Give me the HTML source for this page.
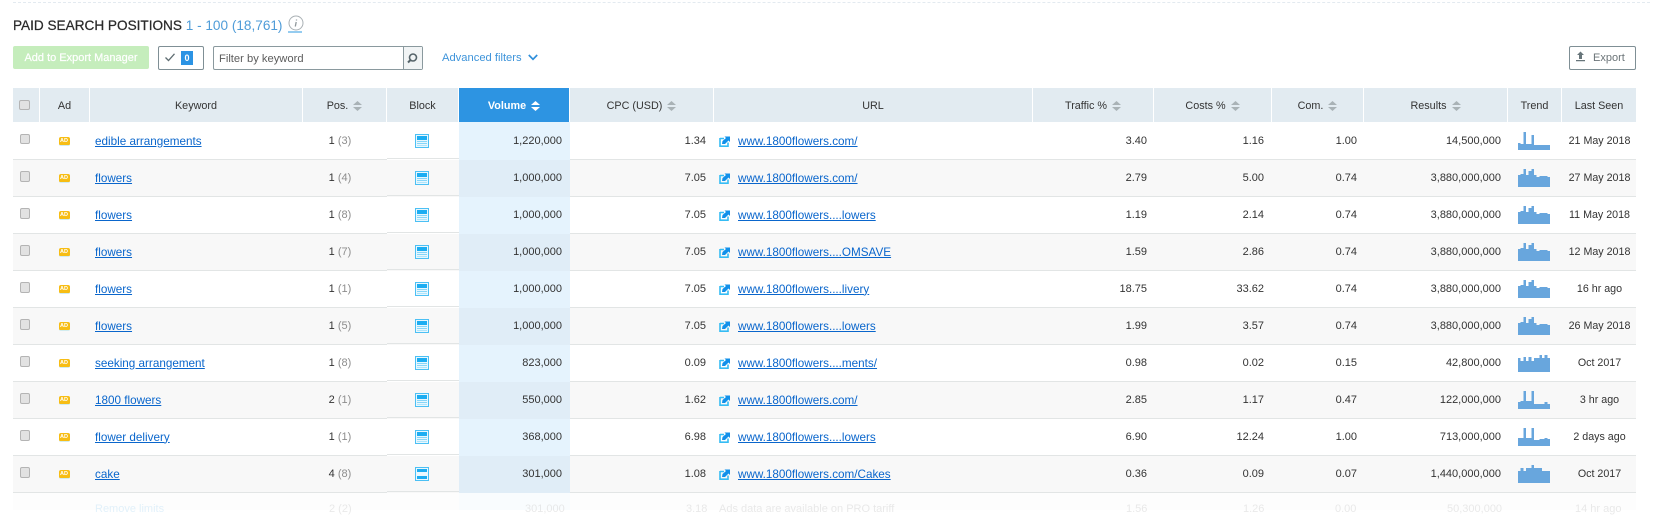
<!DOCTYPE html>
<html><head><meta charset="utf-8"><title>Paid Search Positions</title>
<style>
html,body{margin:0;padding:0;background:#fff}
body{width:1657px;height:510px;overflow:hidden;position:relative;font-family:"Liberation Sans",Arial,sans-serif;font-size:11px;color:#333}
.a{position:absolute;white-space:nowrap}
table{position:absolute;left:13px;top:88px;width:1623px;table-layout:fixed;border-collapse:separate;border-spacing:0}
th{height:34px;padding:1px 0 0;background:#e2ebf1;border-right:1px solid #fff;font-weight:400;color:#333;text-align:center;font-size:10.8px;box-sizing:border-box}
th:last-child{border-right:0}
th.v{background:#2d94e2;color:#fff;font-weight:700;border-right:1px solid #fff}
td{height:37px;padding:1px 0 0;box-sizing:border-box;border-bottom:1px solid #e2e5e5;text-align:right;vertical-align:middle;line-height:13px}
tbody tr:first-child td{height:38px}
tbody tr:nth-child(even) td{background-color:#f8f8f8}
td.c{text-align:center}
td.d{text-align:center;padding-left:1px;font-size:10.7px}
td.l{text-align:left}
td.p{text-align:center;padding-right:10px}
td.k{text-align:center;padding:0 3px 0 0}
td.k .cb{position:relative;top:-1px}
th.k{padding:0 3px 0 0}
td.a1{text-align:center;padding-right:2px}
td.r{padding-right:8px}
td.r7{padding-right:7px}
tbody tr td.vol{background-color:#e5f3fd;padding-right:8px;border-bottom-color:transparent}
tbody tr:nth-child(even) td.vol{background-color:#e0edf7}
tbody tr td.b{text-align:center;padding:0 2px 0 0;border-bottom-color:transparent;background-image:linear-gradient(#e2e5e5,#e2e5e5);background-size:100% 1px;background-position:0 35px;background-repeat:no-repeat}
tbody tr:first-child td.b{background-position:0 36px}
tbody tr:first-child td.l,tbody tr:first-child td.p,tbody tr:first-child td.r,tbody tr:first-child td.r7,tbody tr:first-child td.vol,tbody tr:first-child td.u,tbody tr:first-child td.d,tbody tr:first-child td.a1{padding-top:2px}
a{color:#0a66cc;text-decoration:underline;font-size:11.7px}
.s{display:inline-block;vertical-align:-2px;margin-left:5px}
.g{color:#8d8d8d}
.cb{display:inline-block;width:8.500px;height:8.500px;border:1px solid #b4b4b4;background:#e2e2e2;border-radius:2px;vertical-align:middle}
.ad{display:inline-block;width:11px;height:8px;background:#f7bd14;border-radius:2px;border-bottom:1px solid #d2ecef;color:#fff;font:700 5.500px/8px "Liberation Sans",sans-serif;text-align:center;vertical-align:middle}
svg{display:block}
td svg.i{display:inline-block;vertical-align:middle}
td.t svg{margin-left:10px;shape-rendering:crispEdges}
td.t{padding:0;vertical-align:top;padding-top:9px}
tbody tr:first-child td.t{padding-top:10px}
td.u{text-align:left;padding-left:5px}
td.u svg{display:inline-block;vertical-align:-2px;margin-right:7px}
.ghost{position:absolute;top:503px;font-size:11px;color:#d4d4d4;opacity:.5;white-space:nowrap}
</style></head><body>
<svg width="0" height="0" style="position:absolute">
<symbol id="bk" viewBox="0 0 14 14"><rect width="14" height="14" fill="#4cc0f4"/><rect x="1" y="1" width="12" height="12" fill="#e8f7fe"/><rect x="2" y="2" width="10" height="4" fill="#1cadf2"/><rect x="2" y="7" width="10" height="1" fill="#86d6f8"/><rect x="2" y="9" width="10" height="1" fill="#86d6f8"/><rect x="2" y="11" width="10" height="1" fill="#aee5fb"/></symbol>
<symbol id="bk2" viewBox="0 0 14 14"><rect width="14" height="14" fill="#4cc0f4"/><rect x="1" y="1" width="12" height="12" fill="#eaf8fe"/><rect x="2" y="2" width="10" height="3" fill="#1cadf2"/><rect x="2" y="9" width="10" height="3" fill="#1cadf2"/></symbol>
<symbol id="lk" viewBox="0 0 12 12"><path d="M1 3.500H5M1 3V11.200H9V7.500" fill="none" stroke="#35bcf4" stroke-width="1.600"/><path d="M3 9L3.500 6L7 3L5.500 1.500H11V7L9.500 5.500L6 9Z" fill="#1190ea"/></symbol>
<symbol id="so" viewBox="0 0 9 10"><path d="M4.500 0L9 4H0ZM0 6H9L4.500 10Z" fill="#a9b2b6"/></symbol>
<symbol id="t1" viewBox="0 0 12 18" preserveAspectRatio="none"><path d="M0 18V11H1V12H2V0H3V12H5V3H6V13H12V18Z" fill="#68a6dd"/></symbol>
<symbol id="t2" viewBox="0 0 12 18" preserveAspectRatio="none"><path d="M0 18V6H1V5H2V0H3V6H4V2H5V0H6V6H7V8H8V7H11V8H12V18Z" fill="#68a6dd"/></symbol>
<symbol id="t3" viewBox="0 0 12 18" preserveAspectRatio="none"><path d="M0 18V4H1V7H2V3H3V7H4V3H5V7H6V4H8V1H9V4H10V1H11V4H12V18Z" fill="#68a6dd"/></symbol>
<symbol id="t4" viewBox="0 0 12 18" preserveAspectRatio="none"><path d="M0 18V11H1V10H2V0H3V10H5V0H6V13H10V11H11V13H12V18Z" fill="#68a6dd"/></symbol>
<symbol id="t5" viewBox="0 0 12 18" preserveAspectRatio="none"><path d="M0 18V10H2V0H3V10H5V0H6V12H8V11H10V10H11V11H12V18Z" fill="#68a6dd"/></symbol>
<symbol id="t6" viewBox="0 0 12 18" preserveAspectRatio="none"><path d="M0 18V6H1V3H2V6H3V3H5V0H6V3H9V6H12V18Z" fill="#68a6dd"/></symbol>
</svg>

<div class="a" style="left:13px;top:2px;width:1637px;border-top:1px dashed #e3eaf0"></div>
<div class="a" style="left:13px;top:17px;font-size:13.6px;line-height:17px;color:#2a2a2a;-webkit-text-stroke:.25px #2a2a2a">PAID SEARCH POSITIONS <span style="color:#4f9cd8;-webkit-text-stroke:0">1 - 100 (18,761)</span></div>
<svg class="a" style="left:287px;top:15px" width="18" height="18" viewBox="0 0 18 18"><circle cx="9" cy="8" r="7" fill="none" stroke="#a9b0b4" stroke-width="1"/><path d="M9.500 4.500V5.500M9.200 7L8.300 11.500" stroke="#8f979b" stroke-width="1.300" fill="none"/><path d="M1 17H17" stroke="#2b9ae0" stroke-width="1" stroke-dasharray="14 2"/></svg>

<div class="a" style="left:13px;top:46px;width:136px;height:23px;background:#c5edbc;border-radius:2px;color:#fff;font-size:11px;line-height:25px;text-align:center;-webkit-text-stroke:.2px #fff">Add to Export Manager</div>
<div class="a" style="left:158px;top:46px;width:44px;height:22px;border:1px solid #7f8f95;border-radius:2px"></div>
<svg class="a" style="left:165px;top:53px" width="10" height="9" viewBox="0 0 10 9"><path d="M0.500 4.500L3.500 7.500L9.500 0.800" fill="none" stroke="#5f6d72" stroke-width="1.300"/></svg>
<div class="a" style="left:181px;top:51px;width:12px;height:14px;background:#2b93e4;color:#fff;font:700 9px/14px 'Liberation Sans',sans-serif;text-align:center">0</div>
<div class="a" style="left:213px;top:46px;width:208px;height:22px;border:1px solid #8a999e;border-radius:2px;font-size:11.2px;line-height:24px;color:#5c5c5c"><span style="margin-left:5px">Filter by keyword</span></div>
<div class="a" style="left:403px;top:47px;width:18px;height:22px;border-left:1px solid #8a999e;background:#f1f4f5"></div>
<svg class="a" style="left:406px;top:52px" width="13" height="13" viewBox="0 0 13 13"><circle cx="7" cy="5.500" r="3.500" fill="none" stroke="#56646a" stroke-width="1.600"/><path d="M4.500 8L2 10.500" stroke="#56646a" stroke-width="2"/></svg>
<div class="a" style="left:442px;top:50px;font-size:11.2px;line-height:16px;color:#3e94da">Advanced filters</div>
<svg class="a" style="left:528px;top:54px" width="10" height="7" viewBox="0 0 10 7"><path d="M0.800 1L5 5.300L9.200 1" fill="none" stroke="#2f8fdb" stroke-width="1.700"/></svg>
<div class="a" style="left:1569px;top:46px;width:65px;height:22px;border:1px solid #7f8f95;border-radius:2px;font-size:11px;line-height:22px;color:#6b7478"><span style="margin-left:23px">Export</span></div>
<svg class="a" style="left:1575px;top:51px" width="11" height="11" viewBox="0 0 11 11"><path d="M5.500 0.500L9 4H7V8H4V4H2ZM1 9H10V10.200H1Z" fill="#67757a"/></svg>

<table>
<colgroup><col style="width:27px"><col style="width:50px"><col style="width:213px"><col style="width:84px"><col style="width:72px"><col style="width:111px"><col style="width:144px"><col style="width:319px"><col style="width:121px"><col style="width:118px"><col style="width:92px"><col style="width:144px"><col style="width:54px"><col style="width:74px"></colgroup>
<thead><tr>
<th class="k"><span class="cb"></span></th><th>Ad</th><th>Keyword</th>
<th>Pos.<svg class="s" width="9" height="10" style="display:inline-block"><use href="#so"/></svg></th>
<th>Block</th>
<th class="v">Volume<svg class="s" width="9" height="10" style="display:inline-block;filter:brightness(3)"><use href="#so"/></svg></th>
<th>CPC (USD)<svg class="s" width="9" height="10" style="display:inline-block"><use href="#so"/></svg></th>
<th>URL</th>
<th>Traffic %<svg class="s" width="9" height="10" style="display:inline-block"><use href="#so"/></svg></th>
<th>Costs %<svg class="s" width="9" height="10" style="display:inline-block"><use href="#so"/></svg></th>
<th>Com.<svg class="s" width="9" height="10" style="display:inline-block"><use href="#so"/></svg></th>
<th>Results<svg class="s" width="9" height="10" style="display:inline-block"><use href="#so"/></svg></th>
<th>Trend</th><th>Last Seen</th>
</tr></thead>
<tbody>
<tr><td class="k"><span class="cb"></span></td><td class="a1"><span class="ad">AD</span></td><td class="l"><a style="margin-left:5px">edible arrangements</a></td><td class="p">1 <span class="g">(3)</span></td><td class="b"><svg class="i" width="14" height="14"><use href="#bk"/></svg></td><td class="vol">1,220,000</td><td class="r">1.34</td><td class="u"><svg width="12" height="12"><use href="#lk"/></svg><a>www.1800flowers.com/</a></td><td class="r7">3.40</td><td class="r">1.16</td><td class="r7">1.00</td><td class="r7">14,500,000</td><td class="t"><svg width="32" height="18"><use href="#t1"/></svg></td><td class="d">21 May 2018</td></tr>
<tr><td class="k"><span class="cb"></span></td><td class="a1"><span class="ad">AD</span></td><td class="l"><a style="margin-left:5px">flowers</a></td><td class="p">1 <span class="g">(4)</span></td><td class="b"><svg class="i" width="14" height="14"><use href="#bk"/></svg></td><td class="vol">1,000,000</td><td class="r">7.05</td><td class="u"><svg width="12" height="12"><use href="#lk"/></svg><a>www.1800flowers.com/</a></td><td class="r7">2.79</td><td class="r">5.00</td><td class="r7">0.74</td><td class="r7">3,880,000,000</td><td class="t"><svg width="32" height="18"><use href="#t2"/></svg></td><td class="d">27 May 2018</td></tr>
<tr><td class="k"><span class="cb"></span></td><td class="a1"><span class="ad">AD</span></td><td class="l"><a style="margin-left:5px">flowers</a></td><td class="p">1 <span class="g">(8)</span></td><td class="b"><svg class="i" width="14" height="14"><use href="#bk"/></svg></td><td class="vol">1,000,000</td><td class="r">7.05</td><td class="u"><svg width="12" height="12"><use href="#lk"/></svg><a>www.1800flowers....lowers</a></td><td class="r7">1.19</td><td class="r">2.14</td><td class="r7">0.74</td><td class="r7">3,880,000,000</td><td class="t"><svg width="32" height="18"><use href="#t2"/></svg></td><td class="d">11 May 2018</td></tr>
<tr><td class="k"><span class="cb"></span></td><td class="a1"><span class="ad">AD</span></td><td class="l"><a style="margin-left:5px">flowers</a></td><td class="p">1 <span class="g">(7)</span></td><td class="b"><svg class="i" width="14" height="14"><use href="#bk"/></svg></td><td class="vol">1,000,000</td><td class="r">7.05</td><td class="u"><svg width="12" height="12"><use href="#lk"/></svg><a>www.1800flowers....OMSAVE</a></td><td class="r7">1.59</td><td class="r">2.86</td><td class="r7">0.74</td><td class="r7">3,880,000,000</td><td class="t"><svg width="32" height="18"><use href="#t2"/></svg></td><td class="d">12 May 2018</td></tr>
<tr><td class="k"><span class="cb"></span></td><td class="a1"><span class="ad">AD</span></td><td class="l"><a style="margin-left:5px">flowers</a></td><td class="p">1 <span class="g">(1)</span></td><td class="b"><svg class="i" width="14" height="14"><use href="#bk"/></svg></td><td class="vol">1,000,000</td><td class="r">7.05</td><td class="u"><svg width="12" height="12"><use href="#lk"/></svg><a>www.1800flowers....livery</a></td><td class="r7">18.75</td><td class="r">33.62</td><td class="r7">0.74</td><td class="r7">3,880,000,000</td><td class="t"><svg width="32" height="18"><use href="#t2"/></svg></td><td class="d">16 hr ago</td></tr>
<tr><td class="k"><span class="cb"></span></td><td class="a1"><span class="ad">AD</span></td><td class="l"><a style="margin-left:5px">flowers</a></td><td class="p">1 <span class="g">(5)</span></td><td class="b"><svg class="i" width="14" height="14"><use href="#bk"/></svg></td><td class="vol">1,000,000</td><td class="r">7.05</td><td class="u"><svg width="12" height="12"><use href="#lk"/></svg><a>www.1800flowers....lowers</a></td><td class="r7">1.99</td><td class="r">3.57</td><td class="r7">0.74</td><td class="r7">3,880,000,000</td><td class="t"><svg width="32" height="18"><use href="#t2"/></svg></td><td class="d">26 May 2018</td></tr>
<tr><td class="k"><span class="cb"></span></td><td class="a1"><span class="ad">AD</span></td><td class="l"><a style="margin-left:5px">seeking arrangement</a></td><td class="p">1 <span class="g">(8)</span></td><td class="b"><svg class="i" width="14" height="14"><use href="#bk"/></svg></td><td class="vol">823,000</td><td class="r">0.09</td><td class="u"><svg width="12" height="12"><use href="#lk"/></svg><a>www.1800flowers....ments/</a></td><td class="r7">0.98</td><td class="r">0.02</td><td class="r7">0.15</td><td class="r7">42,800,000</td><td class="t"><svg width="32" height="18"><use href="#t3"/></svg></td><td class="d">Oct 2017</td></tr>
<tr><td class="k"><span class="cb"></span></td><td class="a1"><span class="ad">AD</span></td><td class="l"><a style="margin-left:5px">1800 flowers</a></td><td class="p">2 <span class="g">(1)</span></td><td class="b"><svg class="i" width="14" height="14"><use href="#bk"/></svg></td><td class="vol">550,000</td><td class="r">1.62</td><td class="u"><svg width="12" height="12"><use href="#lk"/></svg><a>www.1800flowers.com/</a></td><td class="r7">2.85</td><td class="r">1.17</td><td class="r7">0.47</td><td class="r7">122,000,000</td><td class="t"><svg width="32" height="18"><use href="#t4"/></svg></td><td class="d">3 hr ago</td></tr>
<tr><td class="k"><span class="cb"></span></td><td class="a1"><span class="ad">AD</span></td><td class="l"><a style="margin-left:5px">flower delivery</a></td><td class="p">1 <span class="g">(1)</span></td><td class="b"><svg class="i" width="14" height="14"><use href="#bk"/></svg></td><td class="vol">368,000</td><td class="r">6.98</td><td class="u"><svg width="12" height="12"><use href="#lk"/></svg><a>www.1800flowers....lowers</a></td><td class="r7">6.90</td><td class="r">12.24</td><td class="r7">1.00</td><td class="r7">713,000,000</td><td class="t"><svg width="32" height="18"><use href="#t5"/></svg></td><td class="d">2 days ago</td></tr>
<tr><td class="k"><span class="cb"></span></td><td class="a1"><span class="ad">AD</span></td><td class="l"><a style="margin-left:5px">cake</a></td><td class="p">4 <span class="g">(8)</span></td><td class="b"><svg class="i" width="14" height="14"><use href="#bk2"/></svg></td><td class="vol">301,000</td><td class="r">1.08</td><td class="u"><svg width="12" height="12"><use href="#lk"/></svg><a>www.1800flowers.com/Cakes</a></td><td class="r7">0.36</td><td class="r">0.09</td><td class="r7">0.07</td><td class="r7">1,440,000,000</td><td class="t"><svg width="32" height="18"><use href="#t6"/></svg></td><td class="d">Oct 2017</td></tr>
</tbody></table>

<div class="a" style="left:13px;top:493px;width:1623px;height:17px;background:#fdfdfd"></div>
<div class="a" style="left:459px;top:493px;width:111px;height:17px;background:#f9fcfe"></div>
<div class="ghost" style="left:95px;color:#c6e4f7">Remove limits</div>
<div class="ghost" style="left:329px">2 (2)</div>
<div class="ghost" style="left:525px">301,000</div>
<div class="ghost" style="left:686px">3.18</div>
<div class="ghost" style="left:719px">Ads data are available on PRO tariff</div>
<div class="ghost" style="left:1126px">1.56</div>
<div class="ghost" style="left:1243px">1.26</div>
<div class="ghost" style="left:1335px">0.00</div>
<div class="ghost" style="left:1447px">50,300,000</div>
<div class="ghost" style="left:1575px">14 hr ago</div>
</body></html>
